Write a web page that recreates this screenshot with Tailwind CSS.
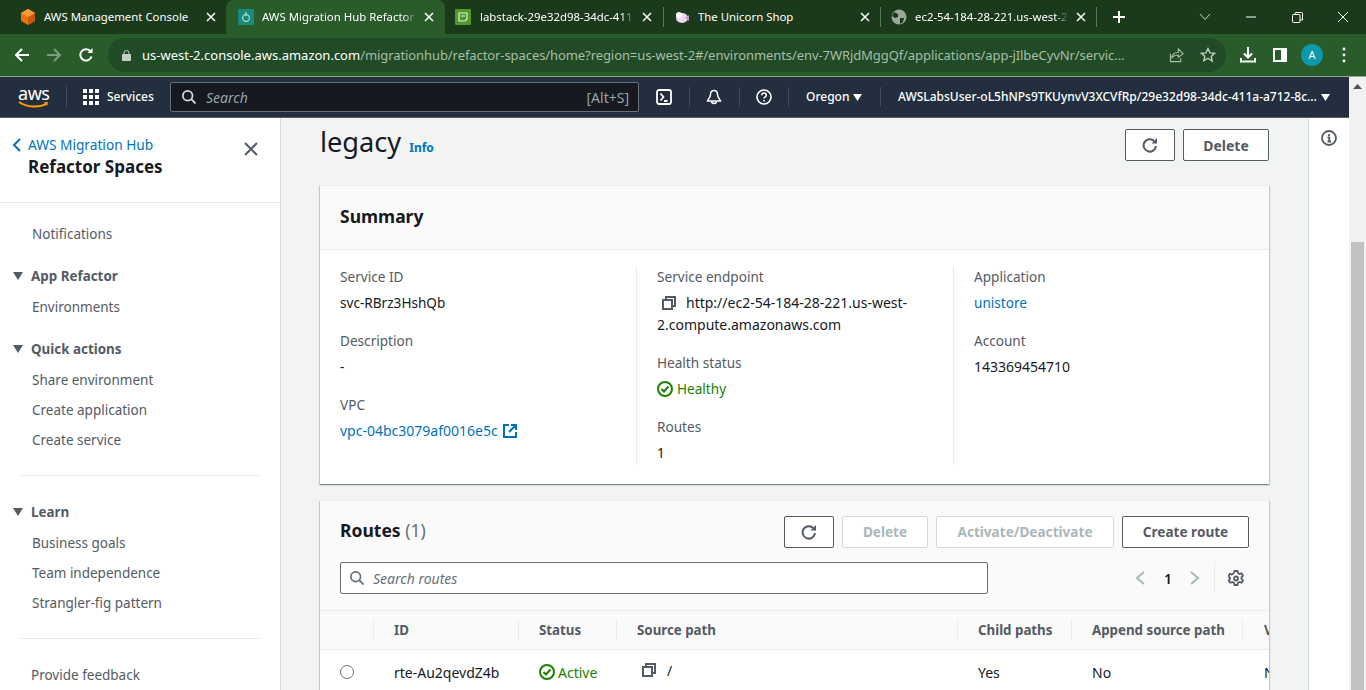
<!DOCTYPE html>
<html lang="en">
<head>
    <meta charset="UTF-8">
    <title>AWS Migration Hub Refactor Spaces</title>
    <script src="https://cdn.jsdelivr.net/npm/@tailwindcss/browser@4"></script>
</head>
<body class="h-[690px] w-[1366px] overflow-hidden bg-white font-['Noto_Sans',sans-serif] text-[14px] text-[#16191f]">
    <!-- Browser tabs -->
    <div class="flex h-[34px] items-center bg-[#1b3a1b] text-[11.4px] text-white">
        <div class="flex h-full w-[226px] items-center pl-[20px] pr-[7px]">
            <svg class="mr-[8px] h-[16px] w-[16px] shrink-0" viewBox="0 0 16 16"><path d="M8 0l7 4v8l-7 4-7-4V4z" fill="#ec7211"/><path d="M8 8l7-4v8l-7 4z" fill="#c45a0a"/><path d="M8 0l7 4-7 4-7-4z" fill="#f79a3e"/></svg>
            <span class="flex-1 whitespace-nowrap">AWS Management Console</span>
            <span class="flex h-[16px] w-[16px] items-center justify-center"><svg class="h-[10px] w-[10px]" viewBox="0 0 10 10" stroke="white" stroke-width="1.5"><path d="M1 1l8 8M9 1l-8 8"/></svg></span>
        </div>
        <div class="flex h-full w-[219px] items-center rounded-t-[8px] bg-[#2a5c2b] pl-[12px] pr-[8px]">
            <svg class="mr-[8px] h-[16px] w-[16px] shrink-0" viewBox="0 0 16 16"><rect width="16" height="16" rx="1" fill="#1b8a7a"/><circle cx="8" cy="9" r="3.5" fill="none" stroke="#cdeee8"/><path d="M8 3v4" stroke="#cdeee8"/></svg>
            <span class="flex-1 whitespace-nowrap [mask-image:linear-gradient(to_left,transparent,black_14px)]">AWS Migration Hub Refactor</span>
            <span class="ml-[4px] flex h-[16px] w-[16px] shrink-0 items-center justify-center"><svg class="h-[10px] w-[10px]" viewBox="0 0 10 10" stroke="white" stroke-width="1.5"><path d="M1 1l8 8M9 1l-8 8"/></svg></span>
        </div>
        <div class="flex h-full w-[218px] items-center pl-[10px] pr-[8px]">
            <svg class="mr-[9px] h-[16px] w-[16px] shrink-0" viewBox="0 0 16 16"><rect width="16" height="16" rx="1" fill="#4f9a2a"/><path d="M4 4h8v6l-2 2H4z" fill="none" stroke="#dff0d0" stroke-width="1.2"/><path d="M6 7h4" stroke="#dff0d0"/></svg>
            <span class="flex-1 whitespace-nowrap [mask-image:linear-gradient(to_left,transparent,black_14px)]">labstack-29e32d98-34dc-411</span>
            <span class="ml-[4px] flex h-[16px] w-[16px] shrink-0 items-center justify-center"><svg class="h-[10px] w-[10px]" viewBox="0 0 10 10" stroke="white" stroke-width="1.5"><path d="M1 1l8 8M9 1l-8 8"/></svg></span>
        </div>
        <div class="h-[20px] w-px bg-[#5b7a5b]"></div>
        <div class="flex h-full w-[216px] items-center pl-[10px] pr-[7px]">
            <svg class="mr-[8px] h-[16px] w-[16px] shrink-0" viewBox="0 0 16 16"><ellipse cx="8" cy="9" rx="6" ry="5" fill="#f0d8ee"/><circle cx="5" cy="6" r="3" fill="#fff"/><path d="M11 9l4-3v6z" fill="#c89ad0"/></svg>
            <span class="flex-1 whitespace-nowrap">The Unicorn Shop</span>
            <span class="ml-[4px] flex h-[16px] w-[16px] shrink-0 items-center justify-center"><svg class="h-[10px] w-[10px]" viewBox="0 0 10 10" stroke="white" stroke-width="1.5"><path d="M1 1l8 8M9 1l-8 8"/></svg></span>
        </div>
        <div class="h-[20px] w-px bg-[#5b7a5b]"></div>
        <div class="flex h-full w-[215px] items-center pl-[10px] pr-[7px]">
            <svg class="mr-[8px] h-[16px] w-[16px] shrink-0" viewBox="0 0 16 16"><circle cx="8" cy="8" r="7.5" fill="#9aa79a"/><path d="M3 3l4 2 0 3-3 1-3-2zM9 9l4 0-1 4-3 2z" fill="#1b3a1b"/></svg>
            <span class="flex-1 whitespace-nowrap [mask-image:linear-gradient(to_left,transparent,black_14px)]">ec2-54-184-28-221.us-west-2</span>
            <span class="ml-[4px] flex h-[16px] w-[16px] shrink-0 items-center justify-center"><svg class="h-[10px] w-[10px]" viewBox="0 0 10 10" stroke="white" stroke-width="1.5"><path d="M1 1l8 8M9 1l-8 8"/></svg></span>
        </div>
        <div class="h-[20px] w-px bg-[#5b7a5b]"></div>
        <div class="flex w-[44px] justify-center">
            <svg class="h-[14px] w-[14px]" viewBox="0 0 14 14" stroke="white" stroke-width="2"><path d="M7 1v12M1 7h12"/></svg>
        </div>
        <div class="flex flex-1 items-center justify-end">
            <div class="flex w-[46px] justify-center"><svg class="h-[8px] w-[12px]" viewBox="0 0 12 8" fill="none" stroke="#c8d4c8"><path d="M1 1l5 5.5L11 1"/></svg></div>
            <div class="flex w-[46px] justify-center"><svg class="h-[10px] w-[10px]" viewBox="0 0 10 10" stroke="#fff"><path d="M0 5h10"/></svg></div>
            <div class="flex w-[46px] justify-center"><svg class="h-[11px] w-[11px]" viewBox="0 0 11 11" fill="none" stroke="#fff"><rect x=".5" y="2.5" width="7.5" height="8" rx="1"/><path d="M3 2.500V1.500a1 1 0 011-1h5.500a1 1 0 011 1V8H8"/></svg></div>
            <div class="flex w-[46px] justify-center"><svg class="h-[12px] w-[12px]" viewBox="0 0 12 12" stroke="#fff"><path d="M1 1l10 10M11 1L1 11"/></svg></div>
        </div>
    </div>

    <!-- Browser toolbar -->
    <div class="flex h-[43px] items-center border-b border-[#8aa88a] bg-[#2a5c2b]">
        <div class="flex w-[108px] shrink-0 items-center pl-[14px]">
            <svg class="h-[16px] w-[16px]" viewBox="0 0 16 16" fill="none" stroke="white" stroke-width="2"><path d="M15 8H2M8 2L2 8l6 6"/></svg>
            <svg class="ml-[16px] h-[16px] w-[16px]" viewBox="0 0 16 16" fill="none" stroke="#7f9d7f" stroke-width="2"><path d="M1 8h13M8 2l6 6-6 6"/></svg>
            <svg class="ml-[16px] h-[16px] w-[16px]" viewBox="0 0 16 16" fill="none" stroke="white" stroke-width="2"><path d="M13.500 9.500a5.700 5.700 0 11-1.300-5.500"/><path d="M14.500 1v5h-5z" fill="white" stroke="none"/></svg>
        </div>
        <div class="flex h-[34px] w-[1118px] items-center rounded-full bg-[#214a26] pl-[14px] pr-[10px]">
            <svg class="mr-[11px] h-[11px] w-[9px] shrink-0" viewBox="0 0 9 11" fill="#c6cfc6"><rect y="4" width="9" height="7" rx="1"/><path d="M2 4V3a2.500 2.500 0 015 0v1" fill="none" stroke="#c6cfc6"/></svg>
            <span class="flex-1 whitespace-nowrap text-[13px] leading-none tracking-[-0.08px] text-[#a9bea9]"><span class="tracking-normal text-white">us-west-2.console.aws.amazon.com</span>/migrationhub/refactor-spaces/home?region=us-west-2#/environments/env-7WRjdMggQf/applications/app-jIlbeCyvNr/servic...</span>
            <svg class="ml-[18px] h-[15px] w-[15px] shrink-0" viewBox="0 0 16 16" fill="none" stroke="#a9bea9" stroke-width="1.200"><path d="M10 1l5 5-5 4V7.500C6 7.500 4 9 3 11c0-4 3-6.500 7-6.500z"/><path d="M1.500 6v8.500h11V11"/></svg>
            <svg class="ml-[16px] h-[16px] w-[16px] shrink-0" viewBox="0 0 16 16" fill="none" stroke="#c6d2c6" stroke-width="1.300"><path d="M8 1.500l2 4.300 4.700.5-3.500 3.200 1 4.600L8 11.300l-4.200 2.500 1-4.600L1.300 6.300 6 5.800z"/></svg>
        </div>
        <div class="flex flex-1 items-center">
            <svg class="ml-[14px] h-[16px] w-[16px]" viewBox="0 0 16 16" fill="none" stroke="white" stroke-width="2"><path d="M8 0v10M4 6.500L8 10.500l4-4M1 11v3.500h14V11"/></svg>
            <svg class="ml-[17px] h-[14px] w-[14px]" viewBox="0 0 14 14"><path d="M0 0h14v14H0z" fill="white"/><path d="M2 2h6v10H2z" fill="#2a5c2b"/></svg>
            <div class="ml-[14px] flex h-[22px] w-[22px] items-center justify-center rounded-full bg-[#0d98ac] text-[11px] text-white">A</div>
            <svg class="ml-[19px] h-[16px] w-[4px]" viewBox="0 0 4 16" fill="white"><circle cx="2" cy="2" r="1.400"/><circle cx="2" cy="8" r="1.400"/><circle cx="2" cy="14" r="1.400"/></svg>
        </div>
    </div>

    <div class="flex h-[613px]">
        <div class="flex w-[1349px] flex-col">
            <!-- AWS top nav -->
            <div class="flex h-[41px] shrink-0 items-center border-b border-[#545b64] bg-[#232f3e] text-[12px] font-medium text-white">
                <div class="relative ml-[18px] h-[30px] w-[31px] shrink-0 text-center">
                    <span class="block text-[18px] font-normal leading-[22px] tracking-tight">aws</span>
                    <svg class="absolute bottom-[3px] left-0 h-[8px] w-[31px]" viewBox="0 0 31 8" fill="none"><path d="M1 1c8 5.500 20 6 28 1.500" stroke="#f90" stroke-width="2"/><path d="M26 1l4 0-1 4z" fill="#f90"/></svg>
                </div>
                <div class="ml-[17px] h-[22px] w-px bg-[#414d5c]"></div>
                <svg class="ml-[16px] h-[16px] w-[16px] shrink-0" viewBox="0 0 16 16" fill="white"><rect width="4" height="4"/><rect x="6" width="4" height="4"/><rect x="12" width="4" height="4"/><rect y="6" width="4" height="4"/><rect x="6" y="6" width="4" height="4"/><rect x="12" y="6" width="4" height="4"/><rect y="12" width="4" height="4"/><rect x="6" y="12" width="4" height="4"/><rect x="12" y="12" width="4" height="4"/></svg>
                <span class="ml-[8px] w-[63px] shrink-0">Services</span>
                <div class="flex h-[30px] w-[469px] shrink-0 items-center rounded-[2px] border border-[#687078] bg-[#16191f] pl-[11px] pr-[9px] text-[14px] font-normal text-[#95a5a6]">
                    <svg class="mr-[10px] h-[14px] w-[14px]" viewBox="0 0 16 16" fill="none" stroke="#d5dbdb" stroke-width="2"><circle cx="6.500" cy="6.500" r="5.500"/><path d="M10.500 10.500l5 5"/></svg>
                    <span class="flex-1 italic">Search</span>
                    <span>[Alt+S]</span>
                </div>
                <svg class="ml-[17px] h-[16px] w-[16px] shrink-0" viewBox="0 0 16 16" fill="none" stroke="white" stroke-width="1.800"><rect x="1" y="1" width="14" height="14" rx="2"/><path d="M4.500 4.500L7.500 8l-3 3.500M8 12h3.500"/></svg>
                <div class="ml-[17px] h-[20px] w-px bg-[#414d5c]"></div>
                <svg class="ml-[16px] h-[16px] w-[16px] shrink-0" viewBox="0 0 16 16" fill="none" stroke="white" stroke-width="1.500"><path d="M8 1.500c-2.500 0-3.500 2-3.500 4 0 3-3 5.500-3 6.500h13c0-1-3-3.500-3-6.500 0-2-1-4-3.500-4zM5.500 12c0 1.500 1 2.500 2.500 2.500s2.500-1 2.500-2.500"/></svg>
                <div class="ml-[17px] h-[20px] w-px bg-[#414d5c]"></div>
                <svg class="ml-[16px] h-[16px] w-[16px] shrink-0" viewBox="0 0 16 16" fill="none" stroke="white" stroke-width="1.600"><circle cx="8" cy="8" r="7"/><path d="M5.800 6.200c0-3 4.500-3 4.500 0 0 1.700-2.300 1.700-2.300 3.400"/><path d="M8 11v1.500"/></svg>
                <div class="ml-[16px] h-[20px] w-px bg-[#414d5c]"></div>
                <span class="ml-[17px] w-[42px] shrink-0">Oregon</span>
                <svg class="ml-[5px] h-[7px] w-[9px] shrink-0" viewBox="0 0 9 7" fill="white"><path d="M0 0h9L4.500 7z"/></svg>
                <div class="ml-[18px] h-[20px] w-px bg-[#414d5c]"></div>
                <span class="ml-[17px] w-[418px] shrink-0 whitespace-nowrap">AWSLabsUser-oL5hNPs9TKUynvV3XCVfRp/29e32d98-34dc-411a-a712-8c...</span>
                <svg class="ml-[5px] h-[7px] w-[9px] shrink-0" viewBox="0 0 9 7" fill="white"><path d="M0 0h9L4.500 7z"/></svg>
            </div>

            <div class="flex min-h-0 flex-1">
                <!-- Side navigation -->
                <aside class="w-[281px] shrink-0 overflow-hidden border-r border-[#d5dbdb] text-[13.5px] text-[#545b64]">
                    <div class="relative h-[85px] border-b border-[#eaeded] pl-[28px] pt-[16px]">
                        <svg class="absolute left-[12px] top-[20px] h-[14px] w-[9px]" viewBox="0 0 9 14" fill="none" stroke="#0073bb" stroke-width="2"><path d="M8 1L2 7l6 6"/></svg>
                        <div class="text-[13.7px] leading-[22px] text-[#0073bb]">AWS Migration Hub</div>
                        <div class="text-[17px] font-bold leading-[22px] text-[#16191f]">Refactor Spaces</div>
                        <svg class="absolute left-[244px] top-[24px] h-[14px] w-[14px]" viewBox="0 0 14 14" stroke="#545b64" stroke-width="2"><path d="M1 1l12 12M13 1L1 13"/></svg>
                    </div>
                    <div class="pl-[32px] pt-[20px] leading-[22px]">Notifications</div>
                    <div class="relative mt-[20px] pl-[31px] text-[13.4px] font-bold leading-[22px]"><svg class="absolute left-[13px] top-[7px] h-[8px] w-[10px]" viewBox="0 0 10 8" fill="#545b64"><path d="M0 0h10L5 8z"/></svg>App Refactor</div>
                    <div class="mt-[9px] pl-[32px] leading-[22px]">Environments</div>
                    <div class="relative mt-[20px] pl-[31px] text-[13.4px] font-bold leading-[22px]"><svg class="absolute left-[13px] top-[7px] h-[8px] w-[10px]" viewBox="0 0 10 8" fill="#545b64"><path d="M0 0h10L5 8z"/></svg>Quick actions</div>
                    <div class="mt-[9px] flex flex-col gap-[8px] pl-[32px] leading-[22px]">
                        <div>Share environment</div>
                        <div>Create application</div>
                        <div>Create service</div>
                    </div>
                    <div class="mx-[20px] mt-[24px] h-px bg-[#eaeded]"></div>
                    <div class="relative mt-[25px] pl-[31px] text-[13.4px] font-bold leading-[22px]"><svg class="absolute left-[13px] top-[7px] h-[8px] w-[10px]" viewBox="0 0 10 8" fill="#545b64"><path d="M0 0h10L5 8z"/></svg>Learn</div>
                    <div class="mt-[9px] flex flex-col gap-[8px] pl-[32px] leading-[22px]">
                        <div>Business goals</div>
                        <div>Team independence</div>
                        <div>Strangler-fig pattern</div>
                    </div>
                    <div class="mx-[20px] mt-[24px] h-px bg-[#eaeded]"></div>
                    <div class="mt-[25px] pl-[31px] leading-[22px]">Provide feedback</div>
                </aside>

                <!-- Main content -->
                <main class="min-w-0 flex-1 overflow-hidden bg-[#f2f3f3] px-[39px]">
                    <div class="flex h-[67px] items-start justify-between pt-[11px]">
                        <div class="flex items-baseline">
                            <h1 class="text-[27.2px] font-normal leading-[26px] text-[#16191f]">legacy</h1>
                            <span class="ml-[8px] text-[12px] font-bold text-[#0073bb]">Info</span>
                        </div>
                        <div class="flex gap-[8px]">
                            <button class="flex h-[32px] w-[50px] items-center justify-center rounded-[2px] border border-[#545b64] bg-white">
                                <svg class="h-[16px] w-[16px]" viewBox="0 0 16 16" fill="none" stroke="#545b64" stroke-width="2"><path d="M14 9a6.200 6.200 0 11-1.800-5"/><path d="M15 1v5.500H9.500z" fill="#545b64" stroke="none"/></svg>
                            </button>
                            <button class="h-[32px] w-[86px] rounded-[2px] border border-[#545b64] bg-white font-bold text-[#545b64]">Delete</button>
                        </div>
                    </div>

                    <!-- Summary card -->
                    <section class="border-t border-[#eaeded] bg-white shadow-[0_1px_1px_0_rgba(0,28,36,0.3),1px_1px_1px_0_rgba(0,28,36,0.15),-1px_1px_1px_0_rgba(0,28,36,0.15)]">
                        <div class="flex h-[64px] items-center border-b border-[#eaeded] bg-[#fafafa] px-[20px] pb-[3px]">
                            <h2 class="text-[17.5px] font-bold text-[#16191f]">Summary</h2>
                        </div>
                        <div class="grid h-[234px] grid-cols-[317px_317px_1fr] pt-[16px] text-[13.6px]">
                            <div class="flex h-[199px] flex-col gap-[16px] border-r border-[#eaeded] pl-[20px]">
                                <div><div class="leading-[22px] text-[#545b64]">Service ID</div><div class="mt-[4px] leading-[22px]">svc-RBrz3HshQb</div></div>
                                <div><div class="leading-[22px] text-[#545b64]">Description</div><div class="mt-[4px] leading-[22px]">-</div></div>
                                <div><div class="leading-[22px] text-[#545b64]">VPC</div><div class="mt-[4px] flex items-center text-[14px] leading-[22px] text-[#0073bb]">vpc-04bc3079af0016e5c<svg class="ml-[5px] h-[14px] w-[14px]" viewBox="0 0 14 14" fill="none" stroke="#0073bb" stroke-width="2"><path d="M6 1H1v12h12V8M8 1h5v5M13 1L6 8"/></svg></div></div>
                            </div>
                            <div class="h-[199px] border-r border-[#eaeded] pl-[20px] pr-[20px]">
                                <div class="leading-[22px] text-[#545b64]">Service endpoint</div>
                                <div class="mt-[4px] text-[14px] leading-[22px]"><svg class="mb-[2px] ml-[5px] mr-[10px] inline-block h-[14px] w-[14px]" viewBox="0 0 14 14" fill="none" stroke="#545b64" stroke-width="2"><path d="M4 4V1h9v9h-3M1 4h9v9H1z"/></svg>http://ec2-54-184-28-221.us-west-2.compute.amazonaws.com</div>
                                <div class="mt-[16px] leading-[22px] text-[#545b64]">Health status</div>
                                <div class="mt-[4px] flex items-center leading-[22px] text-[#1d8102]"><svg class="mr-[4px] h-[16px] w-[16px]" viewBox="0 0 16 16" fill="none" stroke="#1d8102" stroke-width="2"><circle cx="8" cy="8" r="7"/><path d="M4.500 8l2.500 2.500L11.500 5.500"/></svg>Healthy</div>
                                <div class="mt-[16px] leading-[22px] text-[#545b64]">Routes</div>
                                <div class="mt-[4px] leading-[22px]">1</div>
                            </div>
                            <div class="flex flex-col gap-[16px] pl-[20px]">
                                <div><div class="leading-[22px] text-[#545b64]">Application</div><div class="mt-[4px] leading-[22px] text-[#0073bb]">unistore</div></div>
                                <div><div class="leading-[22px] text-[#545b64]">Account</div><div class="mt-[4px] text-[14px] leading-[22px]">143369454710</div></div>
                            </div>
                        </div>
                    </section>

                    <!-- Routes card -->
                    <section class="mt-[16px] h-[300px] overflow-hidden border-t border-[#eaeded] bg-white shadow-[0_1px_1px_0_rgba(0,28,36,0.3),1px_1px_1px_0_rgba(0,28,36,0.15),-1px_1px_1px_0_rgba(0,28,36,0.15)]">
                        <div class="h-[110px] border-b border-[#eaeded] bg-[#fafafa] px-[20px] pt-[15px]">
                            <div class="flex h-[32px] items-center justify-between">
                                <h2 class="pb-[3px] text-[17.5px] font-bold">Routes <span class="font-normal text-[#687078]">(1)</span></h2>
                                <div class="flex gap-[8px] text-[13.6px] font-bold">
                                    <button class="flex h-[32px] w-[50px] items-center justify-center rounded-[2px] border border-[#545b64] bg-white">
                                        <svg class="h-[16px] w-[16px]" viewBox="0 0 16 16" fill="none" stroke="#545b64" stroke-width="2"><path d="M14 9a6.200 6.200 0 11-1.800-5"/><path d="M15 1v5.500H9.500z" fill="#545b64" stroke="none"/></svg>
                                    </button>
                                    <button class="h-[32px] w-[86px] rounded-[2px] border border-[#d5dbdb] bg-white text-[#aab7b8]">Delete</button>
                                    <button class="h-[32px] w-[178px] rounded-[2px] border border-[#d5dbdb] bg-white text-[#aab7b8]">Activate/Deactivate</button>
                                    <button class="h-[32px] w-[127px] rounded-[2px] border border-[#545b64] bg-white text-[#545b64]">Create route</button>
                                </div>
                            </div>
                            <div class="mt-[14px] flex h-[32px] items-center">
                                <div class="flex h-[32px] w-[648px] items-center rounded-[2px] border border-[#687078] bg-white pl-[9px] text-[#687078]">
                                    <svg class="mr-[9px] h-[14px] w-[14px]" viewBox="0 0 16 16" fill="none" stroke="#687078" stroke-width="2"><circle cx="6.500" cy="6.500" r="5.500"/><path d="M10.500 10.500l5 5"/></svg>
                                    <span class="italic">Search routes</span>
                                </div>
                                <div class="ml-auto flex h-[32px] items-center pr-[5px]">
                                    <svg class="h-[14px] w-[10px]" viewBox="0 0 10 14" fill="none" stroke="#aab7b8" stroke-width="2"><path d="M9 1L2 7l7 6"/></svg>
                                    <span class="ml-[19px] w-[8px] text-center font-semibold">1</span>
                                    <svg class="ml-[18px] h-[14px] w-[10px]" viewBox="0 0 10 14" fill="none" stroke="#aab7b8" stroke-width="2"><path d="M1 1l7 6-7 6"/></svg>
                                    <div class="ml-[14px] h-[32px] w-px bg-[#eaeded]"></div>
                                    <svg class="ml-[13px] h-[16px] w-[16px]" viewBox="0 0 16 16" fill="none" stroke="#545b64" stroke-width="1.800"><path d="M6.500 1h3l.4 2 1.700 1 2-.7 1.400 2.500-1.500 1.400v1.600l1.500 1.400-1.400 2.500-2-.7-1.700 1-.4 2h-3l-.4-2-1.700-1-2 .7L.4 10.700l1.500-1.400V7.700L.4 6.300l1.400-2.500 2 .7 1.700-1z"/><circle cx="8" cy="8.500" r="2"/></svg>
                                </div>
                            </div>
                        </div>
                        <div class="grid h-[39px] grid-cols-[54px_145px_98px_341px_114px_171px_60px] items-center overflow-hidden border-b border-[#eaeded] bg-[#fafafa] text-[13.3px] font-bold text-[#545b64]">
                            <div class="h-[20px] border-r border-[#eaeded]"></div>
                            <div class="h-[20px] border-r border-[#eaeded] pl-[20px] leading-[20px]">ID</div>
                            <div class="h-[20px] border-r border-[#eaeded] pl-[20px] leading-[20px]">Status</div>
                            <div class="h-[20px] border-r border-[#eaeded] pl-[20px] leading-[20px]">Source path</div>
                            <div class="h-[20px] border-r border-[#eaeded] pl-[20px] leading-[20px]">Child paths</div>
                            <div class="h-[20px] border-r border-[#eaeded] pl-[20px] leading-[20px]">Append source path</div>
                            <div class="h-[20px] overflow-hidden pl-[21px] leading-[20px]">V</div>
                        </div>
                        <div class="grid h-[44px] grid-cols-[54px_145px_98px_341px_114px_171px_60px] items-center overflow-hidden">
                            <div class="pl-[20px]"><span class="block h-[14px] w-[14px] rounded-full border border-[#687078]"></span></div>
                            <div class="pl-[20px]">rte-Au2qevdZ4b</div>
                            <div class="flex items-center pl-[20px] text-[#1d8102]"><svg class="mr-[3px] h-[16px] w-[16px]" viewBox="0 0 16 16" fill="none" stroke="#1d8102" stroke-width="2"><circle cx="8" cy="8" r="7"/><path d="M4.500 8l2.500 2.500L11.500 5.500"/></svg>Active</div>
                            <div class="flex items-center pb-[4px] pl-[25px]"><svg class="mr-[11px] h-[14px] w-[14px]" viewBox="0 0 14 14" fill="none" stroke="#545b64" stroke-width="2"><path d="M4 4V1h9v9h-3M1 4h9v9H1z"/></svg>/</div>
                            <div class="pl-[20px]">Yes</div>
                            <div class="pl-[20px]">No</div>
                            <div class="overflow-hidden pl-[21px]">N</div>
                        </div>
                    </section>
                </main>

                <!-- Right rail -->
                <div class="w-[41px] shrink-0 border-l border-[#d5dbdb] bg-white pl-[12px] pt-[12px]">
                    <svg class="h-[16px] w-[16px]" viewBox="0 0 16 16" fill="none" stroke="#545b64" stroke-width="1.800"><circle cx="8" cy="8" r="7"/><path d="M6.500 7.500H8.300V11.500M6.500 11.500h3.500M8 4v2"/></svg>
                </div>
            </div>
        </div>

        <!-- Page scrollbar -->
        <div class="relative flex-1 bg-[#f1f1f1]">
            <svg class="absolute left-[4px] top-[7px] h-[5px] w-[9px]" viewBox="0 0 9 5" fill="#505050"><path d="M4.500 0L9 5H0z"/></svg>
            <div class="absolute inset-x-[2px] bottom-0 top-[165px] bg-[#c1c1c1]"></div>
        </div>
    </div>
</body>
</html>
